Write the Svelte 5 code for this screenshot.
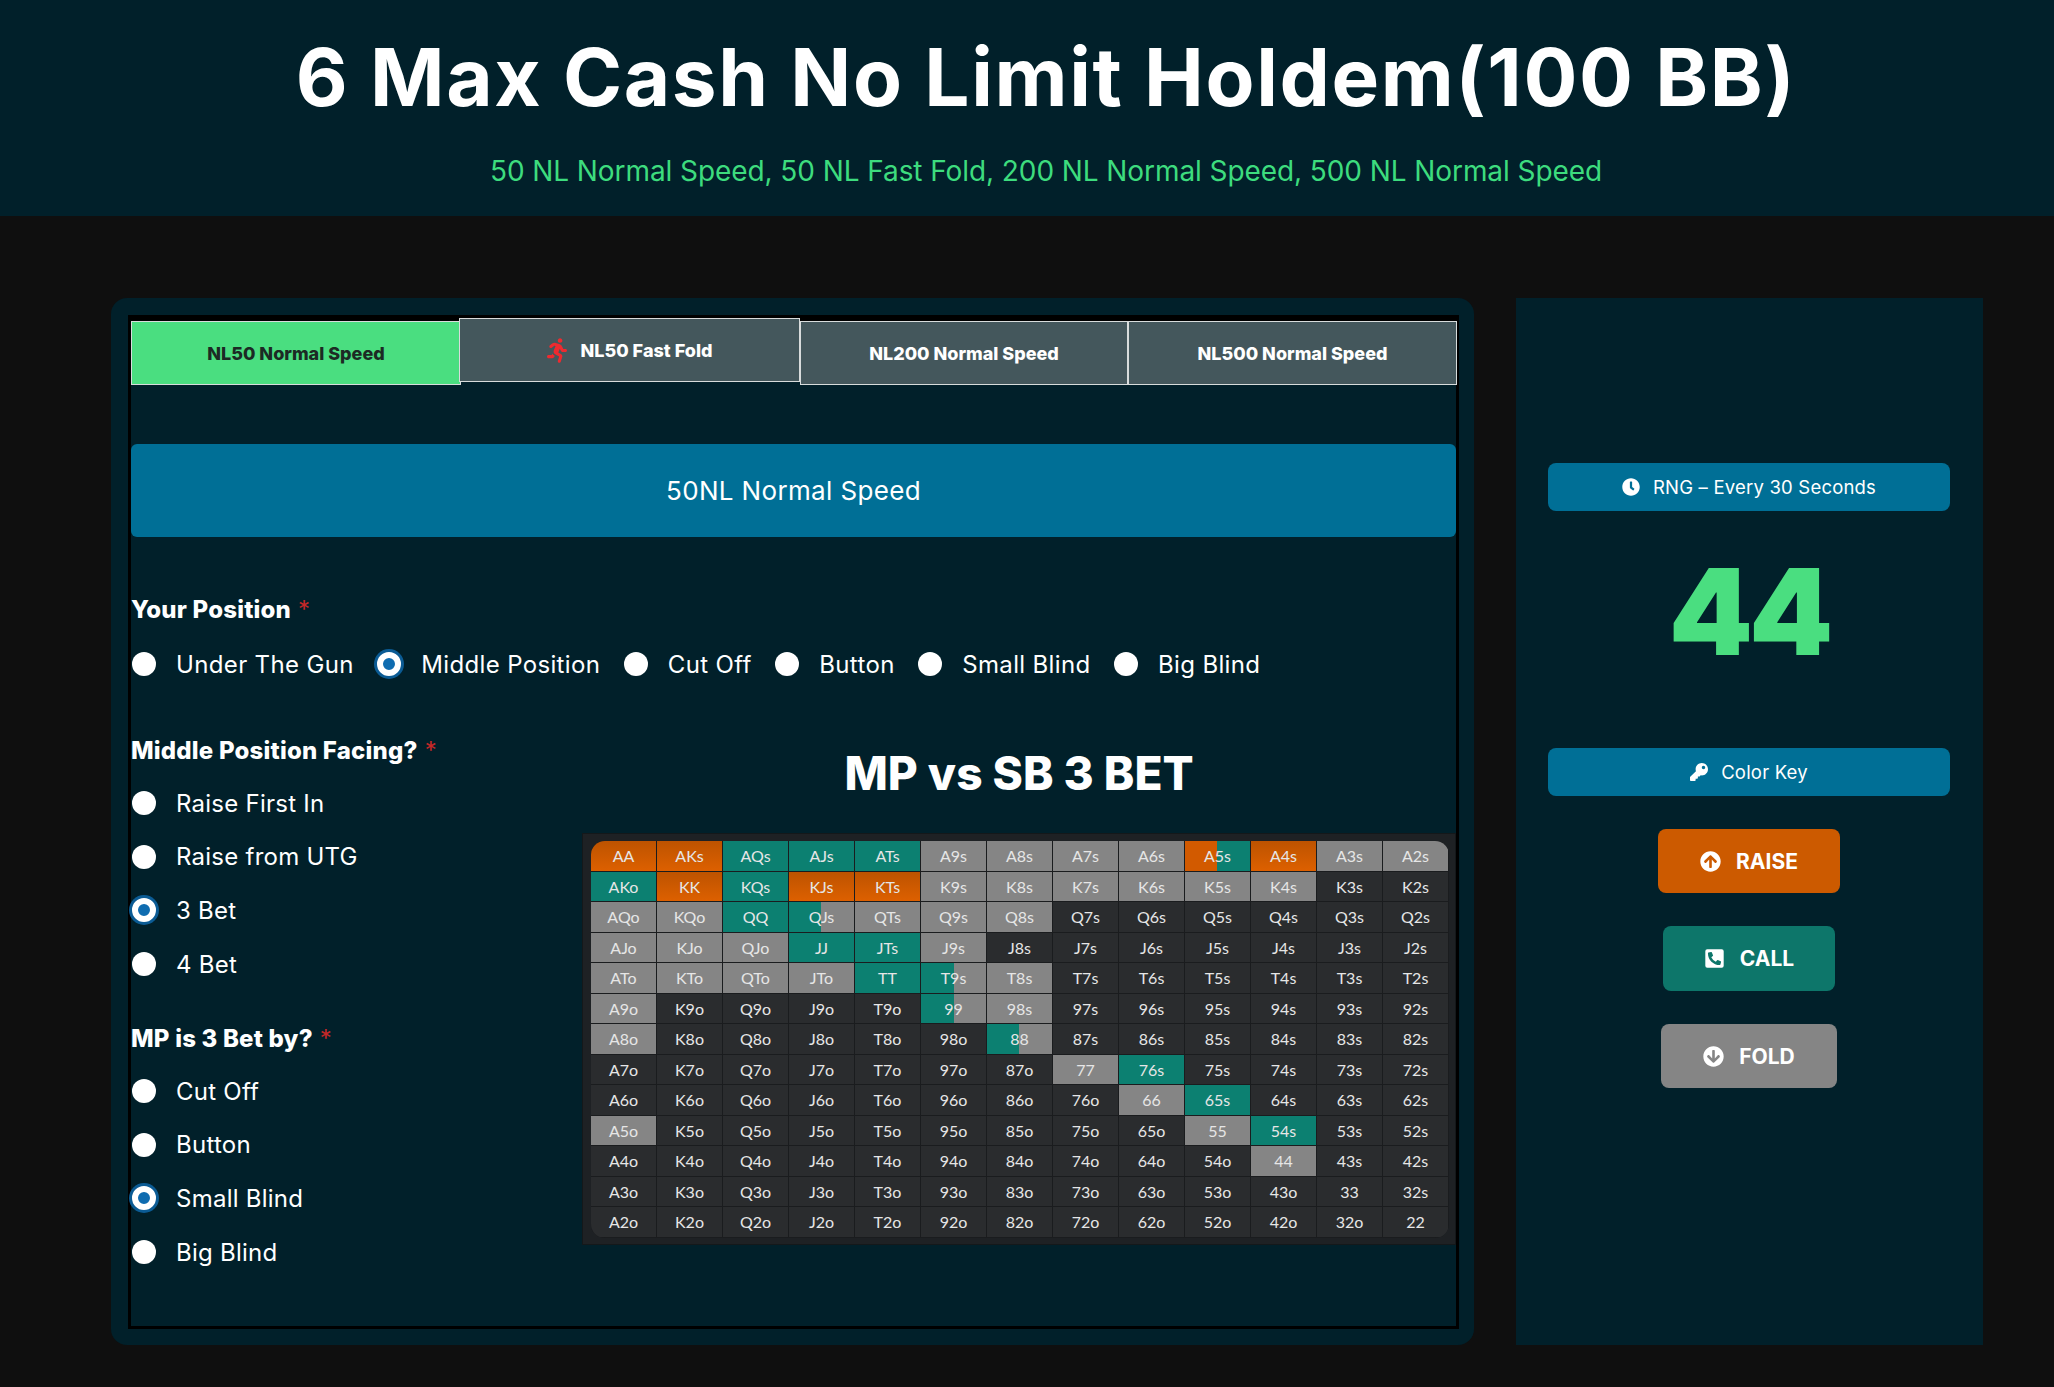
<script>
  const ranks = ["A", "K", "Q", "J", "T", "9", "8", "7", "6", "5", "4", "3", "2"];

  const orange = ["AA", "AKs", "KK", "KJs", "KTs", "A4s"];
  const teal = ["AQs", "AJs", "ATs", "AKo", "KQs", "QQ", "JJ", "JTs", "TT", "76s", "65s", "54s"];
  const gray = [
    "A9s", "A8s", "A7s", "A6s", "A3s", "A2s", "K9s", "K8s", "K7s", "K6s", "K5s", "K4s",
    "AQo", "KQo", "QTs", "Q9s", "Q8s", "AJo", "KJo", "QJo", "J9s", "ATo", "KTo", "QTo", "JTo",
    "T8s", "A9o", "98s", "A8o", "77", "66", "A5o", "55", "44",
  ];
  const split = { A5s: "split-ot", QJs: "split-tg", T9s: "split-tg", "99": "split-tg", "88": "split-tg" };

  function handName(r, c) {
    if (r === c) return ranks[r] + ranks[c];
    return r < c ? ranks[r] + ranks[c] + "s" : ranks[c] + ranks[r] + "o";
  }

  function handClass(hand) {
    if (split[hand]) return split[hand];
    if (orange.includes(hand)) return "raise";
    if (teal.includes(hand)) return "call";
    if (gray.includes(hand)) return "fold";
    return "";
  }

  const hands = ranks.flatMap((_, r) => ranks.map((_, c) => handName(r, c)));

  const tabs = [
    { label: "NL50 Normal Speed", active: true },
    { label: "NL50 Fast Fold", raised: true },
    { label: "NL200 Normal Speed" },
    { label: "NL500 Normal Speed", last: true },
  ];
  const positions = ["Under The Gun", "Middle Position", "Cut Off", "Button", "Small Blind", "Big Blind"];
  const facing = ["Raise First In", "Raise from UTG", "3 Bet", "4 Bet"];
  const threeBettors = ["Cut Off", "Button", "Small Blind", "Big Blind"];
</script>

<header class="top">
  <h1>6 Max Cash No Limit Holdem(100 BB)</h1>
  <p>50 NL Normal Speed, 50 NL Fast Fold, 200 NL Normal Speed, 500 NL Normal Speed</p>
</header>

<main class="page">
  <section class="panel">
    <div class="frame">
      <nav class="tabs">
        {#each tabs as tab}
          <div class="tab" class:active={tab.active} class:raised={tab.raised} class:last={tab.last}>
            {#if tab.raised}
              <svg class="runner" viewBox="0 0 416 512"><path fill="#ee2a2f" d="M272 96c26.51 0 48-21.49 48-48S298.51 0 272 0s-48 21.49-48 48 21.49 48 48 48zM113.69 317.47l-14.8 34.52H32c-17.67 0-32 14.33-32 32s14.33 32 32 32h77.45c19.25 0 36.58-11.44 44.11-29.09l8.79-20.52-10.67-6.3c-17.32-10.23-30.06-25.37-37.99-42.61zM384 223.99h-44.03l-26.06-53.25c-12.5-25.55-35.45-44.23-61.78-50.94l-71.08-21.14c-28.3-6.8-57.77-.55-80.84 17.14l-39.67 30.41c-14.03 10.75-16.69 30.83-5.92 44.86s30.84 16.66 44.86 5.92l39.69-30.41c7.67-5.89 17.44-8 25.27-6.14l14.7 4.37-37.46 87.39c-12.62 29.48-1.31 64.01 26.3 80.31l84.98 50.17-27.47 87.73c-5.28 16.86 4.11 34.81 20.97 40.09 3.19 1 6.41 1.48 9.58 1.48 13.61 0 26.23-8.77 30.52-22.45l31.64-101.06c5.91-20.77-2.89-43.08-21.64-54.39l-61.24-36.14 31.31-78.28 20.27 41.43c8 16.34 24.92 26.89 43.11 26.89H384c17.67 0 32-14.33 32-32s-14.33-31.99-32-31.99z"/></svg>
            {/if}
            {tab.label}
          </div>
        {/each}
      </nav>

      <div class="banner">50NL Normal Speed</div>

      <div class="label first">Your Position <span class="req">*</span></div>
      <div class="radios-row">
        {#each positions as name}
          <div class="radio"><span class="dot" class:on={name === "Middle Position"}></span>{name}</div>
        {/each}
      </div>

      <div class="lower">
        <div class="questions">
          <div class="label">Middle Position Facing? <span class="req">*</span></div>
          <div class="radios-col">
            {#each facing as name}
              <div class="radio"><span class="dot" class:on={name === "3 Bet"}></span>{name}</div>
            {/each}
          </div>
          <div class="label second">MP is 3 Bet by? <span class="req">*</span></div>
          <div class="radios-col">
            {#each threeBettors as name}
              <div class="radio"><span class="dot" class:on={name === "Small Blind"}></span>{name}</div>
            {/each}
          </div>
        </div>

        <div class="chart">
          <h2>MP vs SB 3 BET</h2>
          <div class="matrix">
            <div class="grid">
              {#each hands as hand}
                <div class="cell {handClass(hand)}">{hand}</div>
              {/each}
            </div>
          </div>
        </div>
      </div>
    </div>
  </section>

  <aside class="side">
    <div class="pill">
      <svg viewBox="0 0 512 512"><path fill="#fff" d="M256,8C119,8,8,119,8,256S119,504,256,504,504,393,504,256,393,8,256,8Zm92.49,313h0l-20,25a16,16,0,0,1-22.49,2.5h0l-67-49.72a40,40,0,0,1-15-31.23V112a16,16,0,0,1,16-16h32a16,16,0,0,1,16,16V256l58,42.5A16,16,0,0,1,348.49,321Z"/></svg>
      RNG – Every 30 Seconds
    </div>
    <div class="rng">44</div>
    <div class="pill">
      <svg viewBox="0 0 512 512"><path fill="#fff" d="M512 176.001C512 273.203 433.202 352 336 352c-11.22 0-22.19-1.062-32.827-3.069l-24.012 27.014A23.999 23.999 0 0 1 261.223 384H224v40c0 13.255-10.745 24-24 24h-40v40c0 13.255-10.745 24-24 24H24c-13.255 0-24-10.745-24-24v-78.059c0-6.365 2.529-12.47 7.029-16.971l161.802-161.802C163.108 213.814 160 195.271 160 176 160 78.798 238.797.001 335.999 0 433.488-.001 512 78.511 512 176.001zM336 128c0 26.51 21.49 48 48 48s48-21.49 48-48-21.49-48-48-48-48 21.49-48 48z"/></svg>
      Color Key
    </div>
    <div class="action raise-btn">
      <svg viewBox="0 0 512 512"><path fill="#fff" d="M8 256C8 119 119 8 256 8s248 111 248 248-111 248-248 248S8 393 8 256zm143.6 28.9l72.4-75.5V392c0 13.3 10.7 24 24 24h16c13.3 0 24-10.7 24-24V209.4l72.4 75.5c9.3 9.7 24.8 9.9 34.3.4l10.9-11c9.4-9.4 9.4-24.6 0-33.9L273 107.7c-9.4-9.4-24.6-9.4-33.9 0L106.3 240.4c-9.4 9.4-9.4 24.6 0 33.9l10.9 11c9.6 9.5 25.1 9.3 34.4-.4z"/></svg>
      RAISE
    </div>
    <div class="action call-btn">
      <svg viewBox="0 0 448 512"><path fill="#fff" d="M400 32H48A48 48 0 0 0 0 80v352a48 48 0 0 0 48 48h352a48 48 0 0 0 48-48V80a48 48 0 0 0-48-48zm-16.39 307.37l-15 65A15 15 0 0 1 354 416C194 416 64 286.29 64 126a15.7 15.7 0 0 1 11.63-14.61l65-15A18.23 18.23 0 0 1 144 96a16.27 16.27 0 0 1 13.79 9.09l30 70A17.9 17.9 0 0 1 189 181a17 17 0 0 1-5.5 11.61l-37.89 31a231.91 231.91 0 0 0 110.78 110.78l31-37.89A17 17 0 0 1 299 291a17.85 17.85 0 0 1 5.91 1.21l70 30A16.25 16.25 0 0 1 384 336a17.41 17.41 0 0 1-.39 3.37z"/></svg>
      CALL
    </div>
    <div class="action fold-btn">
      <svg class="flip" viewBox="0 0 512 512"><path fill="#fff" d="M8 256C8 119 119 8 256 8s248 111 248 248-111 248-248 248S8 393 8 256zm143.6 28.9l72.4-75.5V392c0 13.3 10.7 24 24 24h16c13.3 0 24-10.7 24-24V209.4l72.4 75.5c9.3 9.7 24.8 9.9 34.3.4l10.9-11c9.4-9.4 9.4-24.6 0-33.9L273 107.7c-9.4-9.4-24.6-9.4-33.9 0L106.3 240.4c-9.4 9.4-9.4 24.6 0 33.9l10.9 11c9.6 9.5 25.1 9.3 34.4-.4z"/></svg>
      FOLD
    </div>
  </aside>
</main>

<style>
  :global(body) {
    background: #0f0f0f;
    color: #fff;
    font-family: Inter, "Noto Sans", sans-serif;
  }

  .top {
    height: 216px;
    box-sizing: border-box;
    padding-left: 38px;
    background: #01202a;
    text-align: center;
    overflow: hidden;
  }

  h1 {
    margin: 32px 0 0;
    font-size: 80px;
    line-height: 90px;
    font-weight: 700;
    letter-spacing: 1.65px;
  }

  .top p {
    margin: 31px 0 0;
    font-size: 28px;
    line-height: 36px;
    font-weight: 400;
    letter-spacing: -0.08px;
    color: #3ddc7e;
  }

  .page {
    display: flex;
    gap: 42px;
    padding: 82px 71px 42px 111px;
  }

  .panel {
    width: 1363px;
    height: 1047px;
    box-sizing: border-box;
    padding: 17px 15px 16px 17px;
    background: #01202a;
    border-radius: 16px;
  }

  .frame {
    height: 100%;
    box-sizing: border-box;
    border: 3px solid #000;
    border-top-width: 6px;
  }

  .tabs {
    display: flex;
  }

  .tab {
    height: 64px;
    box-sizing: border-box;
    flex: 0 0 328px;
    display: flex;
    align-items: center;
    justify-content: center;
    gap: 14px;
    background: #44575c;
    border: 1.5px solid #d8dcdc;
    font-size: 18px;
    font-weight: 800;
  }

  .tab.active {
    flex-basis: 330px;
    background: #4ade80;
    color: #1c2a24;
  }

  .tab.raised {
    flex-basis: 341px;
    margin: -3px 0 3px -2px;
  }

  .tab.last {
    flex-basis: 329px;
  }

  .runner {
    width: 20px;
    height: 25px;
  }

  .banner {
    margin-top: 59px;
    height: 93px;
    display: flex;
    align-items: center;
    justify-content: center;
    background: #006f96;
    border-radius: 6px;
    font-size: 26px;
    letter-spacing: 0.35px;
  }

  .label {
    height: 36px;
    display: flex;
    align-items: center;
    gap: 7px;
    font-size: 24px;
    font-weight: 800;
    letter-spacing: 0.2px;
  }

  .label.first {
    margin-top: 54px;
  }

  .label.second {
    margin-top: 41px;
  }

  .req {
    color: #c62828;
    font-weight: 400;
  }

  .radios-row {
    display: flex;
    gap: 22.5px;
    margin-top: 22px;
  }

  .radios-row .radio {
    letter-spacing: 0.35px;
  }

  .radios-col {
    display: flex;
    flex-direction: column;
    gap: 23.7px;
    margin-top: 20px;
  }

  .radio {
    height: 30px;
    display: flex;
    align-items: center;
    gap: 20px;
    font-size: 24px;
    letter-spacing: 0.25px;
  }

  .dot {
    width: 24px;
    height: 24px;
    margin-left: 1px;
    box-sizing: border-box;
    border-radius: 50%;
    background: #fff;
  }

  .dot.on {
    border: 6px solid #fff;
    background: #0f6cb0;
    box-shadow: 0 0 0 3px #0b5b94;
  }

  .lower {
    display: flex;
    margin-top: 52px;
  }

  .questions {
    width: 451px;
    padding-top: 1px;
  }

  .chart {
    width: 874px;
    text-align: center;
  }

  h2 {
    margin: 12px 0 0;
    height: 60px;
    font-size: 46px;
    line-height: 60px;
    font-weight: 800;
  }

  .matrix {
    margin-top: 30px;
    box-sizing: border-box;
    padding: 7px 6px 6px 8px;
    background: #1e2124;
    border: 1px solid #14181a;
  }

  .grid {
    display: grid;
    grid-template-columns: repeat(13, 66px);
    grid-auto-rows: 30.5px;
    background: #1a1c1e;
    border-radius: 14px;
    overflow: hidden;
  }

  .cell {
    margin: 0 1px 1px 0;
    display: flex;
    align-items: center;
    justify-content: center;
    background: #2a2c2e;
    color: #e6e6e6;
    font-family: Lato, sans-serif;
    font-size: 16px;
  }

  .raise {
    background: linear-gradient(#bd5300, #dd6000);
  }

  .call {
    background: #0c8071;
  }

  .fold {
    background: #858585;
  }

  .split-ot {
    background: linear-gradient(90deg, #d25a00 50%, #0c8071 50%);
  }

  .split-tg {
    background: linear-gradient(90deg, #0c8071 50%, #858585 50%);
  }

  .side {
    width: 467px;
    height: 1047px;
    box-sizing: border-box;
    padding: 165px 33px 0 32px;
    background: #01202a;
    display: flex;
    flex-direction: column;
    align-items: center;
  }

  .pill {
    width: 100%;
    height: 48px;
    display: flex;
    align-items: center;
    justify-content: center;
    gap: 13px;
    background: #006f96;
    border-radius: 8px;
    font-size: 18.5px;
    letter-spacing: 0.2px;
  }

  .pill svg {
    width: 18px;
    height: 18px;
  }

  .rng {
    height: 201px;
    padding-bottom: 36px;
    display: flex;
    align-items: center;
    font-size: 120px;
    font-weight: 900;
    letter-spacing: -4px;
    color: #4ade80;
  }

  .action {
    height: 64px;
    margin-top: 33px;
    display: flex;
    align-items: center;
    justify-content: center;
    gap: 15px;
    border-radius: 8px;
    font-size: 21px;
    font-weight: 700;
  }

  .action svg {
    width: 21px;
    height: 21px;
  }

  .raise-btn {
    width: 182px;
    background: #cc5a00;
  }

  .call-btn {
    width: 172px;
    height: 65px;
    background: #0d766a;
  }

  .fold-btn {
    width: 176px;
    background: #858585;
  }

  .flip {
    transform: rotate(180deg);
  }
</style>
